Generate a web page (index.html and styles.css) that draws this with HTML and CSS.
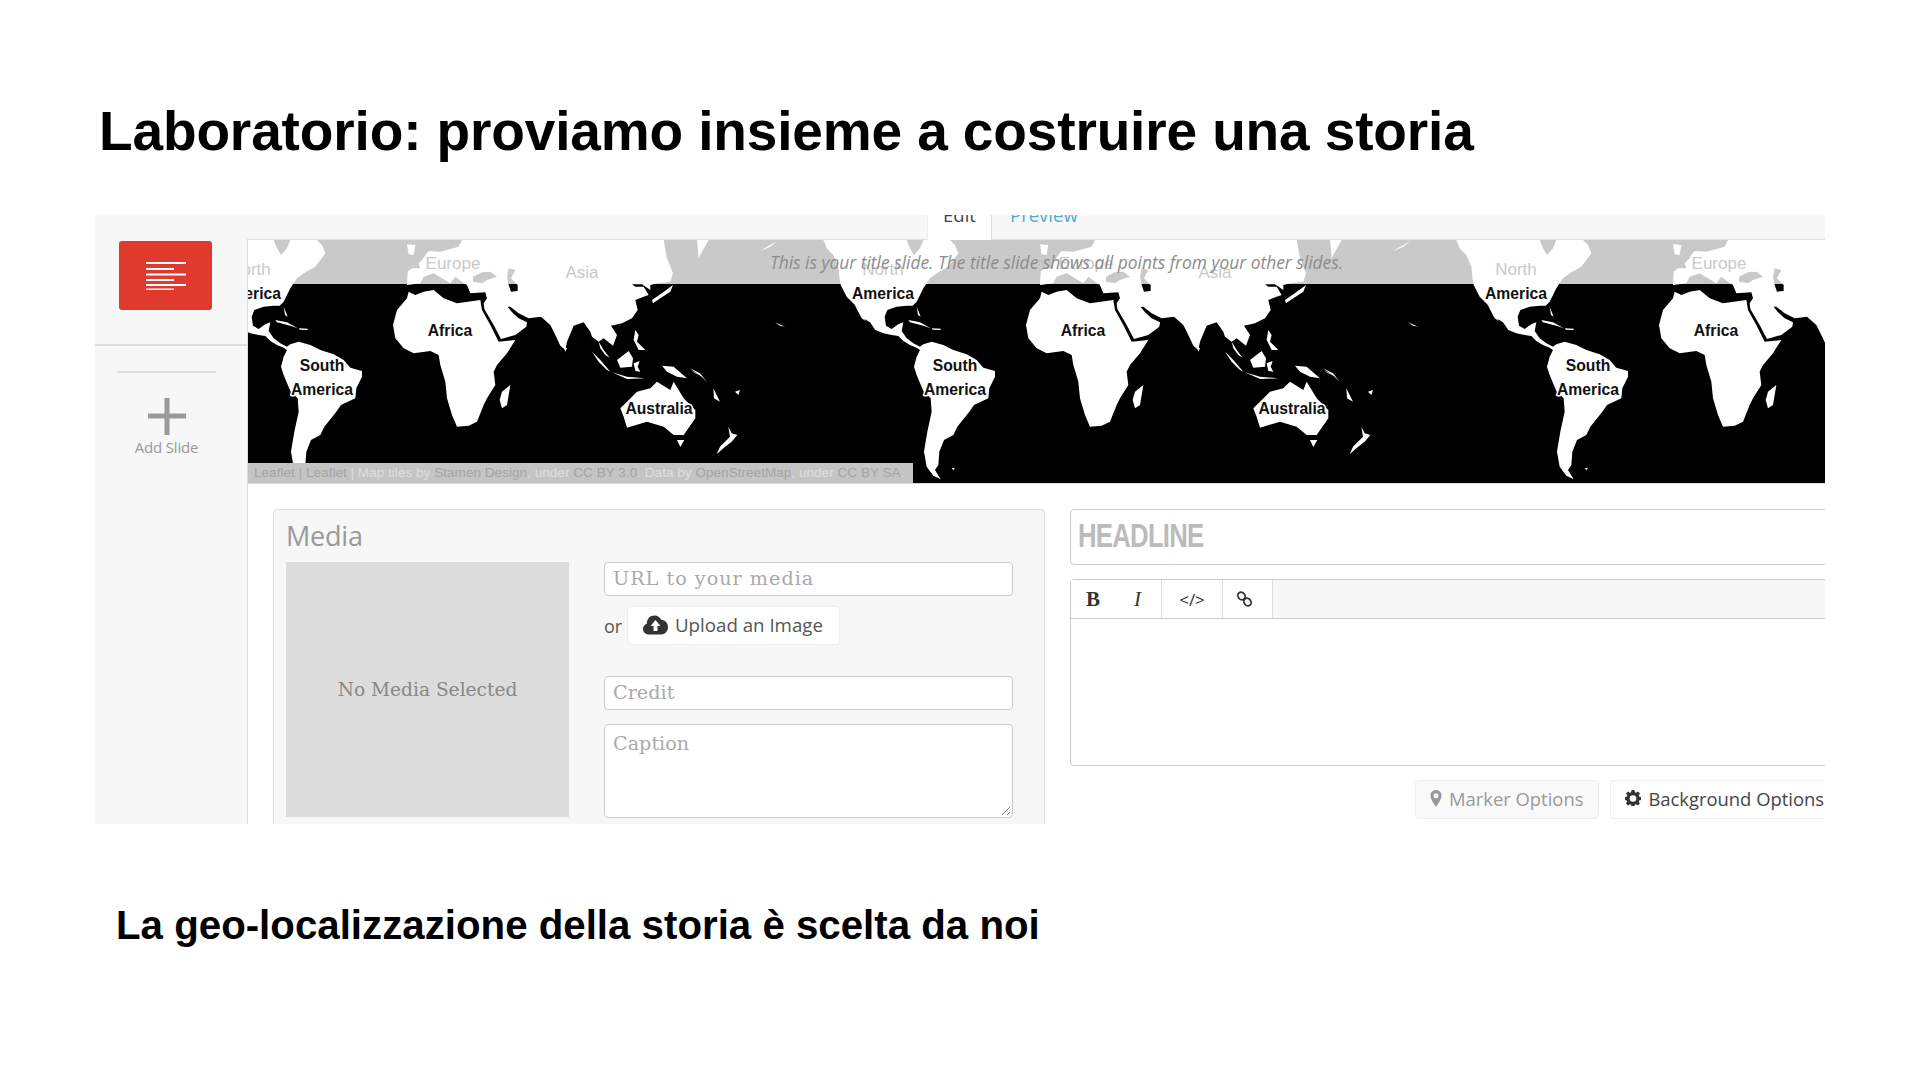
FILE: index.html
```html
<!DOCTYPE html>
<html lang="it">
<head>
<meta charset="utf-8">
<title>Laboratorio</title>
<link rel="stylesheet" href="styles.css">
</head>
<body>
<main class="slide">
  <h1 class="slide-title">Laboratorio: proviamo insieme a costruire una storia</h1>
  <section class="shot">
    <aside class="side">
      <div class="side-top">
        <div class="thumb">
          <svg width="40" height="28" viewBox="0 0 40 28"><path fill="#fff" d="M0 0h40v2H0zM0 6h28v2H0zM0 11.500h40v2H0zM0 17h28v2H0zM0 22h40v2H0zM0 26.500h28v2H0z"/></svg>
        </div>
      </div>
      <div class="add">
        <svg width="38" height="37" viewBox="0 0 38 37"><path fill="#999" d="M16.500 0h5v15.500H38v5H21.500V37h-5V20.500H0v-5h16.500z"/></svg>
        <span class="add-label">Add Slide</span>
      </div>
    </aside>
    <div class="main">
      <nav class="tabs">
        <span class="tab tab-on">Edit</span>
        <span class="tab tab-off">Preview</span>
      </nav>
      <div class="map">
        <svg class="map-art" width="1577" height="243" viewBox="0 0 1577 243">
          <defs>
            <g id="land" transform="scale(.33333)">
              <path fill-rule="evenodd" d="M400 15L410 40 430 60 445 95 448 125 452 150 470 185 480 195 500 215 520 250 540 262 556 285 580 295 605 300 625 303 640 318 660 330 680 338 690 345 680 365 672 395 680 420 700 468 722 490 725 530 712 590 702 650 710 695 730 722 752 733 735 705 745 690 748 650 762 615 790 600 802 575 838 530 852 510 895 490 898 460 915 425 915 408 880 398 860 375 830 358 790 345 760 330 725 320 700 328 690 335 670 325 650 310 635 288 640 262 625 268 605 282 588 272 584 245 592 225 620 215 650 212 668 212 680 200 690 180 700 160 720 130 745 112 775 95 805 55 795 30 780 15ZM650 15L700 15 690 40 672 60 660 40Z"/>
              <path d="M493 208L505 220 527 258 515 250ZM655 255L690 262 722 280 700 272 660 262ZM726 280L752 281 752 285 728 284ZM680 215L692 245 684 240ZM210 48L262 18 240 36ZM255 262L285 275 270 272ZM115 575L125 595 142 600 125 620 100 640 80 658 90 635 120 605ZM785 700L795 698 790 706ZM0 400L30 415 50 440 35 425ZM70 460L90 500 72 490ZM135 470L150 465 145 480Z"/>
              <g transform="translate(990 0)">
                <path d="M65 170L85 180 110 170 140 165 170 190 210 205 280 195 285 225 310 270 335 320 385 315 360 355 330 390 320 410 325 450 300 490 290 510 270 560 245 572 210 575 195 540 180 490 175 440 160 390 155 360 130 348 80 355 50 340 25 310 18 270 30 225 60 190Z"/>
                <path d="M370 450L360 510 345 520 338 495 345 470Z"/>
                <path fill-rule="evenodd" d="M225 15L215 35 180 45 160 50 125 48 115 60 105 75 95 85 100 100 75 100 62 110 60 150 100 145 110 125 140 115 165 130 190 145 205 125 225 140 240 150 250 175 295 172 300 190 290 205 292 222 320 270 342 312 385 300 418 275 420 262 395 250 375 232 362 215 370 215 395 235 425 250 462 245 490 270 505 300 520 332 535 345 540 320 560 272 590 262 610 290 615 305 635 320 650 310 678 332 690 300 672 272 705 265 735 250 752 225 745 195 770 185 785 180 770 155 745 155 735 148 765 148 790 165 790 150 810 145 850 140 858 115 840 70 830 15ZM365 100L385 105 372 130 392 150 392 168 372 170 365 150 360 125ZM258 125L285 112 310 110 330 125 300 135 285 145 258 140Z"/>
                <path d="M60 28L85 30 80 60 65 58ZM858 150L850 170 820 190 798 205 795 195 820 178 845 160ZM930 15L965 15 945 50 935 70ZM615 350L640 375 670 410 660 405 635 380ZM635 320L650 345 668 368 655 360 640 340ZM690 375L725 348 738 370 735 395 700 398ZM675 412L720 425 775 430 720 432ZM740 385L758 378 752 395 760 410 745 408ZM745 285L755 300 750 320 775 345 755 345 740 315ZM825 392L860 395 900 430 870 425 840 410ZM910 405L950 425 925 415ZM530 335L540 340 535 350ZM700 520L720 500 750 470 790 460 810 440 850 465 860 440 890 490 925 525 925 550 890 600 860 600 830 575 780 560 720 578 710 545ZM870 615L892 615 880 636Z"/>
              </g>
            </g>
          </defs>
          <rect class="band" width="1577" height="44"/>
          <use class="land-use" href="#land" x="-191" y="-5"/>
          <use class="land-use" href="#land" x="442" y="-5"/>
          <use class="land-use" href="#land" x="1075" y="-5"/>
          <text class="lbl lbl-soft" x="2" y="35">North</text>
          <text class="lbl" x="2" y="59">America</text>
          <text class="lbl" x="74" y="131">South</text>
          <text class="lbl" x="74" y="155">America</text>
          <text class="lbl" x="202" y="96">Africa</text>
          <text class="lbl lbl-soft" x="205" y="29">Europe</text>
          <text class="lbl lbl-soft" x="334" y="38">Asia</text>
          <text class="lbl" x="411" y="174">Australia</text>
          <text class="lbl lbl-soft" x="635" y="35">North</text>
          <text class="lbl" x="635" y="59">America</text>
          <text class="lbl" x="707" y="131">South</text>
          <text class="lbl" x="707" y="155">America</text>
          <text class="lbl" x="835" y="96">Africa</text>
          <text class="lbl lbl-soft" x="838" y="29">Europe</text>
          <text class="lbl lbl-soft" x="967" y="38">Asia</text>
          <text class="lbl" x="1044" y="174">Australia</text>
          <text class="lbl lbl-soft" x="1268" y="35">North</text>
          <text class="lbl" x="1268" y="59">America</text>
          <text class="lbl" x="1340" y="131">South</text>
          <text class="lbl" x="1340" y="155">America</text>
          <text class="lbl" x="1468" y="96">Africa</text>
          <text class="lbl lbl-soft" x="1471" y="29">Europe</text>
        </svg>
        <p class="map-note">This is your title slide. The title slide shows all points from your other slides.</p>
        <p class="attrib"><b>Leaflet</b> | <b>Leaflet</b> <i>| Map tiles by</i> <b>Stamen Design</b><i>, under</i> <b>CC BY 3.0</b><i>. Data by</i> <b>OpenStreetMap</b><i>, under</i> <b>CC BY SA</b><i>.</i></p>
      </div>
      <div class="editor">
        <section class="media">
          <h2 class="media-title">Media</h2>
          <div class="media-body">
            <div class="media-empty">No Media Selected</div>
            <div class="media-form">
              <div class="field field-url">URL to your media</div>
              <div class="upload-row">
                <span class="or">or</span>
                <span class="upload">
                  <svg width="25" height="20" viewBox="0 0 25 20"><path fill="#333" d="M6 19.500C2.500 19.500 0 17 0 14c0-2.500 1.500-4.500 3.800-5.300C3.800 4 7 .5 11.500.5c3 0 5.500 1.700 6.800 4.200 3.700.2 6.700 3.200 6.700 7.300 0 4.300-3 7.500-7 7.500z"/><path fill="#fff" d="M12.500 5l5 6h-3v5h-4v-5h-3z"/></svg>
                  Upload an Image
                </span>
              </div>
              <div class="field field-credit">Credit</div>
              <div class="field field-caption">Caption
                <svg class="grip" width="10" height="10" viewBox="0 0 10 10"><path stroke="#777" fill="none" d="M1 9l8-8M6 9l3-3"/></svg>
              </div>
            </div>
          </div>
        </section>
        <section class="copy">
          <div class="headline"><span class="headline-text">HEADLINE</span></div>
          <div class="rich">
            <div class="toolbar">
              <span class="tool tool-fmt"><b class="t-b">B</b><i class="t-i">I</i></span>
              <span class="tool tool-code">&lt;/&gt;</span>
              <span class="tool tool-link">
                <svg width="18" height="20" viewBox="0 0 18 20"><g fill="none" stroke="#333" stroke-width="1.800"><ellipse cx="5.500" cy="7" rx="3.400" ry="4" transform="rotate(-35 5.500 7)"/><ellipse cx="11.500" cy="13" rx="3.400" ry="4" transform="rotate(-35 11.500 13)"/></g></svg>
              </span>
            </div>
            <div class="rich-area"></div>
          </div>
          <div class="options">
            <span class="opt opt-off">
              <svg width="12" height="17" viewBox="0 0 12 17"><path fill="#999" fill-rule="evenodd" d="M6 0C2.700 0 .5 2.500.5 5.700.5 9 4 14 6 17c2-3 5.500-8 5.500-11.300C11.500 2.500 9.300 0 6 0zm0 3.300a2.500 2.500 0 1 1 0 5 2.500 2.500 0 0 1 0-5z"/></svg>
              Marker Options
            </span>
            <span class="opt">
              <svg width="16" height="16" viewBox="0 0 16 16"><path fill="#333" fill-rule="evenodd" d="M6.500 0h3l.4 2.200 1.300.6L13 1.500 15 3.600l-1.300 1.800.5 1.300L16 7v3l-1.800.4-.5 1.200 1.200 1.800-2.100 2-1.800-1.200-1.200.5-.4 1.800h-3l-.3-1.800-1.300-.5L3 15.400 1 13.400l1.200-1.800-.5-1.200L0 10V7l1.800-.3.5-1.300L1 3.600l2-2.100 1.800 1.300 1.300-.6zM8 5.200a3.300 3.300 0 1 0 0 6.600 3.300 3.300 0 0 0 0-6.600z"/></svg>
              Background Options
            </span>
          </div>
        </section>
      </div>
    </div>
  </section>
  <h2 class="slide-sub">La geo-localizzazione della storia è scelta da noi</h2>
</main>
</body>
</html>
```
FILE: styles.css
```css
* { box-sizing: border-box; }
html, body { margin: 0; padding: 0; background: #fff; }
.slide { width: 1920px; height: 1080px; overflow: hidden; display: flex; flex-direction: column; }
.slide-title {
  margin: 98px 0 0 99px; height: 117px; color: #000; letter-spacing: -.13px;
  font: 700 55px/66px "Liberation Sans", Arial, sans-serif;
}
.slide-sub {
  margin: 79px 0 0 116px; color: #000;
  font: 700 40.250px/46px "Liberation Sans", Arial, sans-serif;
}
.shot {
  margin-left: 95px; width: 1730px; height: 609px; flex: none; overflow: hidden;
  display: flex; background: #fff; font-family: "Open Sans", sans-serif;
}
.side { width: 152px; flex: none; background: #f7f7f7; }
.side-top { height: 131px; padding: 26px 0 0 24px; border-bottom: 2px solid #ddd; }
.thumb {
  width: 93px; height: 69px; background: #e0392e; border-radius: 3px;
  display: flex; align-items: center; justify-content: center;
}
.add { margin: 25px 31px 0 22px; padding-top: 25px; border-top: 2px solid #ddd; display: flex; flex-direction: column; align-items: center; }
.add-label { margin-top: 3px; color: #999; font-size: 15px; line-height: 19px; letter-spacing: -.2px; white-space: nowrap; }
.main { width: 1578px; flex: none; border-left: 1px solid #ddd; }
.tabs {
  height: 25px; margin-left: -1px; background: #f7f7f7; border-bottom: 1px solid #ddd;
  display: flex; align-items: flex-start; padding-left: 680px;
  font-size: 18.500px;
}
.tab { display: block; line-height: 0; }
.tab-on { width: 65px; height: 25px; background: #fff; color: #444; text-align: center; border-right: 1px solid #ddd; border-left: 1px solid #eee; }
.tab-off { margin-left: 18px; color: #4aaed4; }
.map { position: relative; height: 244px; background: #000; overflow: hidden; border-bottom: 1px solid #ddd; }
.map-art { display: block; }
.band { fill: #c9c9c9; }
.land-use { fill: #fff; }
.lbl {
  font: 700 15.700px "Liberation Sans", Arial, sans-serif; text-anchor: middle; fill: #111;
  stroke: #fff; stroke-width: 3px; paint-order: stroke; stroke-linejoin: round;
}
.lbl-soft { font-weight: 400; font-size: 17px; fill: #c9c9c9; stroke: none; }
.map-note {
  position: absolute; left: 522px; top: 11px; margin: 0; white-space: nowrap;
  color: #8c8c8c; font: italic 400 17.400px/22px "Open Sans", sans-serif;
}
.attrib {
  position: absolute; left: 0; bottom: 0; width: 665px; height: 20px; margin: 0; padding-left: 6px;
  background: #c4c4c4; white-space: nowrap; overflow: hidden;
  color: #aaa; font: 400 13.600px/20px "Liberation Sans", Arial, sans-serif;
}
.attrib b { font-weight: 400; color: #a4a4a4; }
.attrib i { font-style: normal; color: #dedede; }
.editor { padding: 25px 0 0 25px; display: grid; grid-template-columns: 772px 800px; column-gap: 25px; }
.media { height: 330px; padding: 0 12px; background: #f7f7f7; border: 1px solid #ddd; border-radius: 4px; }
.media-title { margin: 11px 0 11px; height: 30px; color: #999; font: 400 27px/30px "Open Sans", sans-serif; letter-spacing: -.2px; }
.media-body { display: flex; gap: 35px; }
.media-empty {
  width: 283px; height: 255px; background: #dcdcdc; flex: none;
  display: flex; align-items: center; justify-content: center;
  color: #888; font: 400 18.600px/20px "DejaVu Serif", serif; white-space: nowrap;
}
.media-form { width: 409px; display: flex; flex-direction: column; }
.field {
  position: relative; height: 34px; padding: 0 8px; background: #fff; border: 1px solid #ccc; border-radius: 4px;
  color: #aaa; font: 400 19.200px/32px "DejaVu Serif", serif; white-space: nowrap;
}
.field-url { letter-spacing: 1px; }
.field-credit { margin-top: 31px; }
.field-caption { margin-top: 14px; height: 94px; padding-top: 3px; }
.grip { position: absolute; right: 1px; bottom: 1px; }
.upload-row { margin-top: 10px; height: 39px; display: flex; align-items: center; gap: 5px; color: #555; font-size: 18px; }
.or { width: 18px; }
.upload {
  height: 39px; width: 213px; padding: 0 0 2px 15px; background: #fff; border: 1px solid #eee; border-radius: 4px;
  display: flex; align-items: center; gap: 7px; color: #555; font-size: 18.700px; white-space: nowrap;
}
.headline { height: 56px; padding-left: 7px; background: #fff; border: 1px solid #ccc; border-radius: 4px; }
.headline-text { display: inline-block; transform: scaleX(.757); transform-origin: left center; color: #bbb; font: 700 34px/50px "Liberation Sans", sans-serif; letter-spacing: -1px; }
.rich { margin-top: 14px; height: 187px; background: #fff; border: 1px solid #ccc; border-radius: 4px; }
.toolbar { height: 39px; background: #f7f7f7; border-bottom: 1px solid #ccc; display: flex; }
.tool { height: 38px; background: #fff; border-right: 1px solid #ddd; display: flex; align-items: center; justify-content: center; color: #333; }
.tool-fmt { width: 91px; gap: 34px; font: 400 21px/37px "Liberation Serif", serif; border-radius: 4px 0 0 0; padding-right: 5px; }
.t-b { font-weight: 700; }
.tool-code { width: 61px; font: 400 17px/37px "Open Sans", sans-serif; }
.tool-link { width: 50px; justify-content: flex-start; padding-left: 13px; }
.options { margin-top: 14px; display: flex; gap: 11px; padding-left: 345px; font-size: 18.400px; }
.opt {
  height: 39px; padding: 0 15px 3px 14px; background: #fff; border: 1px solid #eee; border-radius: 4px;
  display: flex; align-items: center; gap: 7px; color: #444; white-space: nowrap;
}
.opt-off { background: #f9f9f9; color: #999; }
```
